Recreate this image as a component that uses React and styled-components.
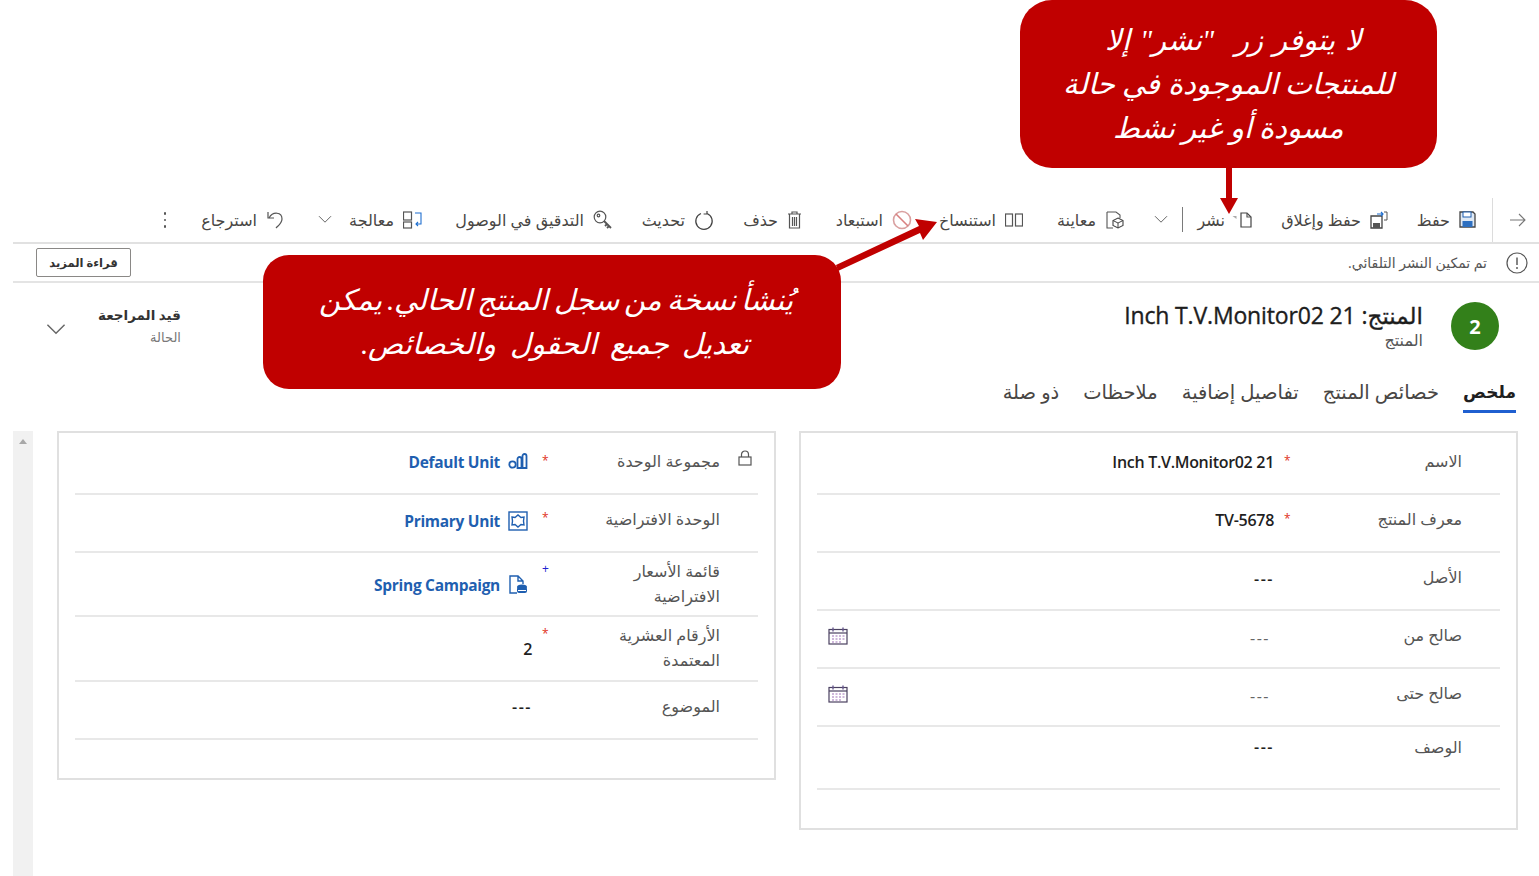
import React from 'react';
import styled, { createGlobalStyle } from 'styled-components';

const Global = createGlobalStyle`
  html, body { margin: 0; padding: 0; background: #fff; height: 100%; overflow: hidden; }
  body { font-family: "Open Sans", "DejaVu Sans", sans-serif; color: #242424; }
`;
const Page = styled.div`
  direction: rtl; width: 1539px; height: 876px; position: relative; overflow: hidden;
  padding: 198px 0 0 13px; box-sizing: border-box;
`;
const Toolbar = styled.div`
  display: flex; align-items: center; border-bottom: 2px solid #e1e1e1; box-sizing: border-box; height: 46px;
`;
const NavSlot = styled.div`
  width: 47px; height: 44px; display: flex; align-items: center; justify-content: center;
  border-left: 1px solid #dcdcdc; box-sizing: border-box; margin-left: 16px;
  padding-left: 2px;
`;
const Tool = styled.div`
  display: flex; align-items: center; gap: 9px; width: ${p => p.$w}px; flex: none;
  font-size: 16px; color: #484644; white-space: nowrap; line-height: 20px; margin-top: -1px;
`;
const Divider = styled.span`
  width: 1px; height: 25px; background: #7a7a7a; margin: 0 5px 0 5px; flex: none;
`;
const ToolChevron = styled.span`display: inline-flex; margin-right: ${p => p.$m || 0}px;`;
const PublishSlot = styled.span`display: flex; margin-left: -2px;`;
const More = styled.div`
  width: 10px; display: flex; flex-direction: column; gap: 4px; align-items: center; margin-right: -10px;
  span { width: 2.5px; height: 2.5px; background: #555; border-radius: 50%; }
`;
const Notice = styled.div`
  height: 39px; display: flex; align-items: center; justify-content: space-between;
  border-bottom: 2px solid #e4e4e4; box-sizing: border-box; padding: 0 11px 0 23px;
`;
const NoticeText = styled.div`
  display: flex; align-items: center; gap: 19px; font-size: 14px; color: #555;
`;
const ReadMore = styled.button`
  width: 95px; height: 29px; border: 1px solid #8a8886; border-radius: 2px; background: #fff; padding: 0;
  font: 700 11.5px "Open Sans", "DejaVu Sans", sans-serif; color: #333;
`;
const Header = styled.div`
  height: 91px; display: flex; justify-content: space-between; padding: 19px 40px 0 33px; box-sizing: border-box;
`;
const Identity = styled.div`display: flex; gap: 28px;`;
const Avatar = styled.div`
  width: 48px; height: 48px; border-radius: 50%; background: #33801a; color: #fff; font-size: 20px; font-weight: 700;
  display: flex; align-items: center; justify-content: center;
`;
const TitleBlock = styled.div`display: flex; flex-direction: column; margin-top: -3px;`;
const Title = styled.div`
  font-size: 23px; letter-spacing: -0.15px; line-height: 32px; color: #1d1d1d; -webkit-text-stroke: 0.35px #1d1d1d;
`;
const Subtitle = styled.div`font-size: 16px; line-height: 18px; color: #555;`;
const Status = styled.div`display: flex; gap: 32px; align-items: center; margin-top: -2px; height: 48px;`;
const StatusChevron = styled.span`display: inline-flex; margin-top: 10px;`;
const StatusText = styled.div`display: flex; flex-direction: column; gap: 5px; margin-top: 3px;`;
const StatusValue = styled.div`font-size: 13.5px; font-weight: 700; color: #333; line-height: 18px;`;
const StatusLabel = styled.div`font-size: 13px; color: #777; line-height: 16px;`;
const Tabs = styled.div`display: flex; gap: 24px; padding-right: 23px; height: 39px; margin-bottom: 18px;`;
const Tab = styled.div`
  font-size: ${p => (p.$active ? 17 : 19.5)}px; line-height: 36px; height: 39px; color: ${p => (p.$active ? '#1f1f1f' : '#484644')};
  font-weight: ${p => (p.$active ? 600 : 400)}; box-sizing: border-box;
  border-bottom: ${p => (p.$active ? '3px solid #1f5fd0' : '0')};
`;
const Body = styled.div`display: flex; gap: 23px; padding-right: 21px; align-items: flex-start;`;
const Card = styled.div`
  width: 719px; flex: none; height: ${p => p.$h}px; border: 2px solid #e0e0e0; box-sizing: border-box; padding: 0 16px;
`;
const Row = styled.div`
  display: grid; grid-template-columns: 226px 1fr; height: ${p => p.$h}px; box-sizing: border-box;
  border-bottom: 2px solid #e8e8e8; padding-top: ${p => p.$top}px;
`;
const Label = styled.div`
  position: relative; padding-right: 38px; font-size: 16px; line-height: 25px; color: #555; white-space: pre-line;
`;
const Star = styled.span`
  position: absolute; left: 10px; top: ${p => p.$y}px; font-size: 12px; line-height: 12px; color: ${p => (p.$blue ? '#2020d0' : '#e03020')};
`;
const Value = styled.div`
  display: flex; align-items: center; justify-content: space-between; font-size: 16px; letter-spacing: -0.3px; line-height: 25px; height: 25px;
  color: ${p => (p.$muted ? '#666' : '#1f1f1f')}; font-weight: ${p => (p.$muted ? 400 : 600)};
  margin-top: ${p => p.$mt || 0}px;
`;
const Dashes = styled.span`
  letter-spacing: 1.5px; padding-right: ${p => (p.$muted ? 4 : 0)}px;
`;
const LinkValue = styled.div`
  display: flex; align-items: center; gap: 8px; font-size: 15.5px; letter-spacing: -0.3px; font-weight: 700; color: #1f5fb0;
  height: 25px; padding-right: 4px; margin-top: ${p => p.$mt || 0}px;
`;
const LockSlot = styled.span`position: absolute; right: 6px; top: 1px; display: flex;`;
const Ltr = styled.span`direction: ltr; unicode-bidi: isolate;`;
const CalSlot = styled.span`display: flex; margin-left: 11px; margin-top: -6px;`;
const Scrollbar = styled.div`
  width: 20px; height: 446px; flex: none; background: #f1f1f1; margin-right: 1px; display: flex; justify-content: center; padding-top: 8px; box-sizing: border-box;
  span { width: 0; height: 0; border: 4px solid transparent; border-top: 0; border-bottom: 5px solid #a8a8a8; }
`;
const Callout = styled.div`
  position: absolute; left: ${p => p.$x}px; top: ${p => p.$y}px; width: ${p => p.$w}px; height: ${p => p.$h}px;
  border-radius: ${p => p.$r}px; background: #c00000; color: #fff; text-align: center; box-sizing: border-box;
  padding-top: ${p => p.$pt}px; font: italic 400 29px/44px "Liberation Serif", "DejaVu Serif", serif; z-index: 3;
`;
const CalloutLine = styled.div`
  word-spacing: ${p => p.$ws || 0}px; transform: translateX(${p => p.$dx || 0}px);
`;
const Arrow = styled.svg`position: absolute; left: 0; top: 0; z-index: 2; pointer-events: none;`;

const S = { fill: 'none', stroke: '#555', strokeWidth: 1.2 };
const Ic = ({ w = 20, h = 20, children }) => <svg width={w} height={h} viewBox={`0 0 ${w} ${h}`} style={{ flex: 'none' }}>{children}</svg>;
const Chevron = ({ w = 14 }) => <svg width={w} height={w * 0.6} viewBox="0 0 14 8"><path d="M1 1l6 6 6-6" fill="none" stroke="#666" strokeWidth="1" /></svg>;

const SaveIcon = () => <Ic w={17} h={17}><path d="M1 1h13l2 2v13H1z" fill="#dfe9f5" stroke="#444" strokeWidth="1.3" /><rect x="4" y="1" width="8" height="5" fill="#fff" stroke="#1f5fb0" /><rect x="3.5" y="10" width="10" height="6" fill="#2d6fc0" /></Ic>;
const SaveCloseIcon = () => <Ic w={18} h={18}><path d="M1 5h11v12H1z" fill="#fff" stroke="#444" strokeWidth="1.3" /><rect x="3" y="12" width="7" height="5" fill="#555" /><path d="M7 3h6M11 1l2 2-2 2" fill="none" stroke="#1f6fd0" strokeWidth="1.2" /><path d="M14 1h3v8h-3" fill="none" stroke="#555" /></Ic>;
const PublishIcon = () => <Ic w={20} h={16}><path d="M0.5 4h4v3z" fill="#aaa" /><path d="M9 1h6l4 4v10H9z" fill="#fff" stroke="#444" strokeWidth="1.2" /><path d="M15 1v4h4" {...S} /></Ic>;
const PreviewIcon = () => <Ic w={19} h={18}><path d="M2 1h9l4 3v3M8 17H2V1" fill="none" stroke="#555" strokeWidth="1.1" /><path d="M13 7l5 2.5v5L13 17l-5-2.5v-5z" fill="#fff" stroke="#444" strokeWidth="1.1" /><path d="M8 9.5l5 2.5 5-2.5M13 12v5" fill="none" stroke="#444" /></Ic>;
const CloneIcon = () => <Ic w={18} h={14}><rect x="0.5" y="1" width="7" height="12" {...S} /><rect x="10.5" y="1" width="7" height="12" {...S} /></Ic>;
const BanIcon = () => <Ic><circle cx="10" cy="10" r="8.5" fill="none" stroke="#d9a0a0" strokeWidth="1.6" /><path d="M4 4l12 12" stroke="#d98080" strokeWidth="1.6" /></Ic>;
const TrashIcon = () => <Ic w={15} h={18}><path d="M1 3h13M5 3V1h5v2" {...S} /><path d="M2.5 3v14h10V3" {...S} /><path d="M5.5 6v9M7.5 6v9M9.5 6v9" {...S} /></Ic>;
const RefreshIcon = () => <Ic><path d="M7 3.5a8.2 8.2 0 1 0 6 0M13 1v3h-3.4" fill="none" stroke="#444" strokeWidth="1.2" /></Ic>;
const KeyIcon = () => <Ic><circle cx="7" cy="7" r="5.8" {...S} /><circle cx="5.5" cy="5.5" r="1.3" {...S} /><path d="M11 11l7 7M14 14l-2 2M16 16l-2 2" fill="none" stroke="#555" strokeWidth="1.8" /></Ic>;
const ProcessIcon = () => <Ic w={19} h={18}><rect x="0.5" y="1" width="8" height="8" {...S} /><rect x="0.5" y="11" width="8" height="6" {...S} /><path d="M12 2h6v11h-5M15 11l-2 2 2 2" fill="none" stroke="#1f6fd0" strokeWidth="1.1" /></Ic>;
const UndoIcon = () => <Ic w={18} h={19}><path d="M3 8c4-7 13-6 13 1 0 4-3 6-6 9" fill="none" stroke="#555" strokeWidth="1.2" /><path d="M2 2v6h6" fill="none" stroke="#555" strokeWidth="1.2" /></Ic>;
const InfoIcon = () => <Ic w={22} h={22}><circle cx="11" cy="11" r="10" {...S} /><path d="M11 5.5v7.5M11 15v2" stroke="#444" strokeWidth="1.3" /></Ic>;
const LockIcon = () => <Ic w={14} h={16}><rect x="1" y="7" width="12" height="8" {...S} /><path d="M3.5 7V4.5a3.5 3.5 0 0 1 7 0V7" {...S} /></Ic>;
const UnitsIcon = () => <Ic w={20} h={17}><g fill="none" stroke="#1f5fb0" strokeWidth="1.8"><circle cx="4.5" cy="11.5" r="3.2" /><path d="M9.5 15V6a2 2 0 0 1 4 0v9zM14.5 15V3a2 2 0 0 1 4 0v12z" /></g></Ic>;
const PrimaryIcon = () => <Ic w={20} h={20}><rect x="1" y="1" width="18" height="18" fill="none" stroke="#1f5fb0" strokeWidth="1.4" /><path d="M4 6l3 .5L10 4l3 2.5 3-.5-.5 4 .5 4-3-.5-3 2.5-3-2.5-3 .5.5-4z" fill="none" stroke="#1f5fb0" strokeWidth="1.4" /></Ic>;
const PriceIcon = () => <Ic w={20} h={20}><path d="M9 18H2V1h8l5 5v3M10 1v5h5" fill="none" stroke="#1f5fb0" strokeWidth="1.4" /><ellipse cx="14" cy="12" rx="5" ry="2.5" fill="#1f5fb0" /><rect x="9" y="12" width="10" height="6" rx="2" fill="#1f5fb0" /><path d="M10 15.5h8" stroke="#fff" /></Ic>;
const CalIcon = () => (
  <Ic w={20} h={18}>
    <rect x="1" y="2.5" width="18" height="14.5" fill="#fff" stroke="#4a4060" strokeWidth="1.2" />
    <path d="M1 6h18" stroke="#4a4060" strokeWidth="1.2" /><path d="M5 0.5v4M15 0.5v4" stroke="#6a5a90" strokeWidth="1.4" />
    <path d="M4 9h2M7.5 9h2M11 9h2M14.5 9h2M4 12h2M7.5 12h2M11 12h2M14.5 12h2M7.5 15h2M11 15h2M4 15h2" stroke="#a070b8" strokeWidth="1.2" />
  </Ic>
);

const Tool2 = ({ w, icon, label, after }) => <Tool $w={w}>{icon}<span>{label}</span>{after}</Tool>;

export default function App() {
  return (
    <Page>
      <Global />
      <Toolbar>
        <NavSlot><svg width="17" height="14" viewBox="0 0 17 14"><path d="M1 7h15M10 1l6 6-6 6" fill="none" stroke="#777" strokeWidth="1.1" /></svg></NavSlot>
        <Tool2 w={88} icon={<SaveIcon />} label="حفظ" />
        <Tool2 w={136} icon={<SaveCloseIcon />} label="حفظ وإغلاق" />
        <Tool $w={128}><PublishSlot><PublishIcon /></PublishSlot><span>نشر</span><Divider /><ToolChevron><Chevron /></ToolChevron></Tool>
        <Tool2 w={101} icon={<PreviewIcon />} label="معاينة" />
        <Tool2 w={111} icon={<CloneIcon />} label="استنساخ" />
        <Tool2 w={110} icon={<BanIcon />} label="استبعاد" />
        <Tool2 w={88} icon={<TrashIcon />} label="حذف" />
        <Tool2 w={101} icon={<RefreshIcon />} label="تحديث" />
        <Tool2 w={191} icon={<KeyIcon />} label="التدقيق في الوصول" />
        <Tool $w={138}><ProcessIcon /><span>معالجة</span><ToolChevron $m={8}><Chevron /></ToolChevron></Tool>
        <Tool2 w={124} icon={<UndoIcon />} label="استرجاع" />
        <More><span /><span /><span /></More>
      </Toolbar>
      <Notice>
        <NoticeText><InfoIcon />تم تمكين النشر التلقائي.</NoticeText>
        <ReadMore>قراءة المزيد</ReadMore>
      </Notice>
      <Header>
        <Identity>
          <Avatar>2</Avatar>
          <TitleBlock>
            <Title>المنتج: Inch T.V.Monitor02 21</Title>
            <Subtitle>المنتج</Subtitle>
          </TitleBlock>
        </Identity>
        <Status>
          <StatusText><StatusValue>قيد المراجعة</StatusValue><StatusLabel>الحالة</StatusLabel></StatusText>
          <StatusChevron><Chevron w={20} /></StatusChevron>
        </Status>
      </Header>
      <Tabs>
        <Tab $active>ملخص</Tab><Tab>خصائص المنتج</Tab><Tab>تفاصيل إضافية</Tab><Tab>ملاحظات</Tab><Tab>ذو صلة</Tab>
      </Tabs>
      <Body>
        <Card $h={399}>
          <Row $h={62} $top={16}><Label>الاسم<Star $y={6}>*</Star></Label><Value $mt={1}><Ltr>Inch T.V.Monitor02 21</Ltr></Value></Row>
          <Row $h={58} $top={12}><Label>معرف المنتج<Star $y={6}>*</Star></Label><Value $mt={1}><Ltr>TV-5678</Ltr></Value></Row>
          <Row $h={58} $top={12}><Label>الأصل</Label><Value $mt={2}><Dashes>---</Dashes></Value></Row>
          <Row $h={58} $top={12}><Label>صالح من</Label><Value $muted $mt={3}><Dashes $muted>---</Dashes><CalSlot><CalIcon /></CalSlot></Value></Row>
          <Row $h={58} $top={12}><Label>صالح حتى</Label><Value $muted $mt={3}><Dashes $muted>---</Dashes><CalSlot><CalIcon /></CalSlot></Value></Row>
          <Row $h={63} $top={8}><Label>الوصف</Label><Value><Dashes>---</Dashes></Value></Row>
        </Card>
        <Card $h={349}>
          <Row $h={62} $top={16}><Label><LockSlot><LockIcon /></LockSlot>مجموعة الوحدة<Star $y={6}>*</Star></Label><LinkValue $mt={0}><UnitsIcon /><Ltr>Default Unit</Ltr></LinkValue></Row>
          <Row $h={58} $top={12}><Label>الوحدة الافتراضية<Star $y={5}>*</Star></Label><LinkValue $mt={1}><PrimaryIcon /><Ltr>Primary Unit</Ltr></LinkValue></Row>
          <Row $h={64} $top={6}><Label>قائمة الأسعار{'\n'}الافتراضية<Star $y={4} $blue>+</Star></Label><LinkValue $mt={13}><PriceIcon /><Ltr>Spring Campaign</Ltr></LinkValue></Row>
          <Row $h={65} $top={6}><Label>الأرقام العشرية{'\n'}المعتمدة<Star $y={5}>*</Star></Label><Value $mt={14}>2</Value></Row>
          <Row $h={58} $top={12}><Label>الموضوع</Label><Value $mt={1}><Dashes>---</Dashes></Value></Row>
        </Card>
        <Scrollbar><span /></Scrollbar>
      </Body>
      <Arrow width="1539" height="876" viewBox="0 0 1539 876">
        <path d="M1226 168h6v30h6l-9 16-9-16h6z" fill="#c00000" />
        <path d="M836 265l83-39-4-7 22 3-14 18-3-7-82 38z" fill="#c00000" />
      </Arrow>
      <Callout $x={1020} $y={0} $w={417} $h={168} $r={32} $pt={18}>
        <CalloutLine $ws={3} $dx={5}>لا يتوفر زر{'\u00a0\u00a0'}"نشر" إلا</CalloutLine>
        <CalloutLine>للمنتجات الموجودة في حالة</CalloutLine>
        <CalloutLine>مسودة أو غير نشط</CalloutLine>
      </Callout>
      <Callout $x={263} $y={255} $w={578} $h={134} $r={26} $pt={23}>
        <CalloutLine $ws={-2} $dx={4}>يُنشأ نسخة من سجل المنتج الحالي. يمكن</CalloutLine>
        <CalloutLine $ws={6} $dx={3}>تعديل جميع الحقول والخصائص.</CalloutLine>
      </Callout>
    </Page>
  );
}
